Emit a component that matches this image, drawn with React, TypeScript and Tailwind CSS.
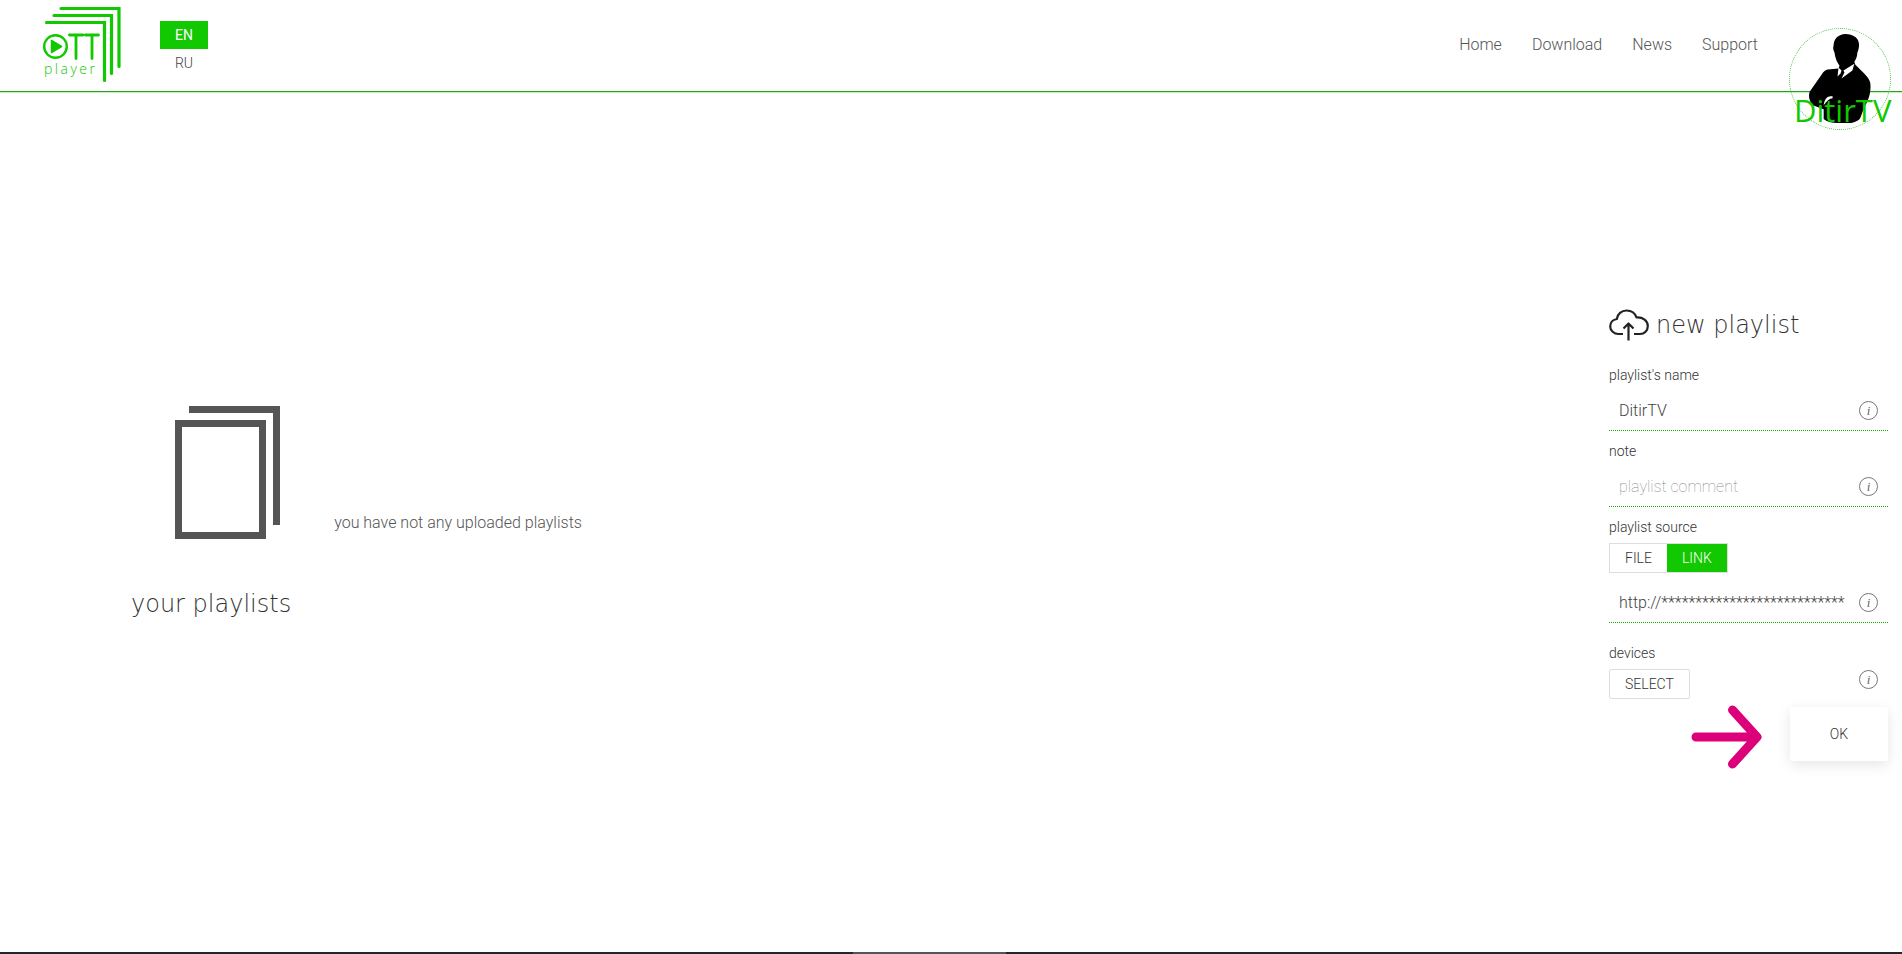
import { useState } from 'react'
import clsx from 'clsx'

const NAV = ['Home', 'Download', 'News', 'Support']

function Logo() {
  return (
    <svg width="80" height="80" viewBox="0 0 80 80" fill="none" stroke="#12c800" strokeLinecap="round">
      <g strokeWidth="3.2">
        <path d="M4.500 18.500H62.500V76.500" />
        <path d="M12 11.500H69.500V69.500" />
        <path d="M19 4.500H77V62.500" />
      </g>
      <circle cx="13.500" cy="42.500" r="11.300" strokeWidth="2.400" />
      <path d="M9.500 36.500V48.500L19.500 42.500Z" fill="#12c800" strokeWidth="1.500" strokeLinejoin="round" />
      <path d="M27.500 31H41M34 31V54.500M43.500 31H56.500M50 31V54.500" strokeWidth="2.800" />
      <text
        x="2"
        y="70"
        fontSize="14"
        fontFamily="Open Sans, sans-serif"
        fontWeight="300"
        letterSpacing="2.500"
        fill="#12c800"
        stroke="none"
      >
        player
      </text>
    </svg>
  )
}

function Avatar() {
  return (
    <a href="#profile" className="relative block size-[102px] rounded-full border border-dotted border-[#4fc445]">
      <svg className="size-full" viewBox="0 0 101 101">
        <path
          d="M56 5C49 5 44 10 44 17C43 19 44 22 45 24C46 31 48 34 50 37L49 40L38 41C35 42 34 43 32 46L20 63C18 68 20 73 23 77L34 81V91C37 94 42 95 48 95H62C67 94 70 92 71 90L75 79C81 70 82 60 81 54C80 49 74 44 66 36L65 33C67 30 68 27 68 24C71 17 70 11 66 8C63 6 60 5 56 5Z"
          fill="#000"
        />
        <path d="M49 39L48 48L51 45L52 42Z" fill="#fff" />
        <path d="M65 35L54 42L55 44L52 50L63 42Z" fill="#fff" />
        <path d="M43 68C38 67 35 70 34 77C37 73 40 70 43 70Z" fill="#fff" />
      </svg>
      <span className="absolute top-[63px] left-1 font-['Open_Sans'] text-[31px] leading-9 font-normal text-[#12c800]">
        DitirTV
      </span>
    </a>
  )
}

function InfoButton() {
  return (
    <button
      type="button"
      aria-label="info"
      className="flex size-[19px] shrink-0 items-center justify-center rounded-full border border-[#777] font-['Liberation_Serif'] text-[13px] leading-none text-[#666] italic"
    >
      i
    </button>
  )
}

interface FieldProps {
  id: string
  label?: string
  ariaLabel?: string
  value: string
  placeholder?: string
  onChange: (value: string) => void
}

function Field({ id, label, ariaLabel, value, placeholder, onChange }: FieldProps) {
  return (
    <div>
      {label && (
        <label htmlFor={id} className="block text-sm">
          {label}
        </label>
      )}
      <div className="flex h-[46px] items-center border-b border-dotted border-[#12a800] px-2.5 pt-1.5">
        <input
          id={id}
          aria-label={ariaLabel}
          value={value}
          placeholder={placeholder}
          onChange={(e) => onChange(e.target.value)}
          className="mr-2 min-w-0 flex-1 bg-transparent text-base font-light text-[#444] outline-none placeholder:font-thin placeholder:text-[#888]"
        />
        <InfoButton />
      </div>
    </div>
  )
}

export default function App() {
  const [lang, setLang] = useState('EN')
  const [source, setSource] = useState('LINK')
  const [name, setName] = useState('DitirTV')
  const [note, setNote] = useState('')
  const [url, setUrl] = useState('http://***************************')

  return (
    <div className="flex min-h-screen flex-col bg-white font-['Roboto',sans-serif] font-light text-[#333]">
      <header className="flex h-[92px] items-start border-b border-[#2a9d22] pr-[11px] pl-[42px] shadow-[0_1px_1px_#c4f3c0]">
        <a href="#home" aria-label="OTT player" className="mt-1">
          <Logo />
        </a>
        <div className="mt-[21px] ml-[38px] flex flex-col text-sm">
          {['EN', 'RU'].map((l) => (
            <button
              key={l}
              type="button"
              onClick={() => setLang(l)}
              className={clsx('h-7 w-12', l === lang ? 'bg-[#12c800] font-normal text-white' : 'text-[#444]')}
            >
              {l}
            </button>
          ))}
        </div>
        <nav className="mt-[33px] mr-[31px] ml-auto flex gap-[30px] text-base text-[#555]">
          {NAV.map((item) => (
            <a key={item} href={`#${item.toLowerCase()}`}>
              {item}
            </a>
          ))}
        </nav>
        <div className="mt-7">
          <Avatar />
        </div>
      </header>

      <main className="flex flex-1 items-center justify-between pr-3.5 pl-[131px]">
        <section className="flex items-start gap-[43px] pb-[18px]">
          <div className="flex flex-col items-center">
            <svg width="106" height="134" viewBox="0 0 106 134" fill="none" stroke="#555" strokeWidth="7" className="ml-[34px]">
              <path d="M3.500 17.500H87.500V129.500H3.500Z" />
              <path d="M14 3.500H101.500V119" />
            </svg>
            <h2 className="mt-12 font-['DejaVu_Sans'] text-2xl font-extralight">your playlists</h2>
          </div>
          <p className="mt-[105px] text-base text-[#555]">you have not any uploaded playlists</p>
        </section>

        <form className="w-[279px] pt-[34px]" onSubmit={(e) => e.preventDefault()}>
          <h2 className="mb-6 flex items-center gap-[7px] font-['DejaVu_Sans'] text-2xl font-extralight">
            <svg
              width="40"
              height="32"
              viewBox="0 0 40 32"
              fill="none"
              stroke="#222"
              strokeWidth="2.200"
              strokeLinejoin="round"
            >
              <path d="M14 25H9.500C5 25 1.200 21.500 1.200 17.500C1.200 13.500 4 10.500 7.800 10C8.500 5 12.500 1.500 17.500 1.500C22 1.500 26 4 27.500 8.500C34 8 38.800 12 38.800 17C38.800 21.500 35.500 25 31 25H25" />
              <path d="M19.500 31.500V15M14.500 19.500L19.500 14.500L24.500 19.500" />
            </svg>
            new playlist
          </h2>

          <div className="flex flex-col gap-2.5">
            <Field id="name" label="playlist's name" value={name} onChange={setName} />
            <Field id="note" label="note" value={note} placeholder="playlist comment" onChange={setNote} />
          </div>

          <fieldset className="mt-2.5">
            <legend className="text-sm">playlist source</legend>
            <div className="mt-1.5 flex h-[30px] w-fit border border-[#ddd] text-sm">
              {['FILE', 'LINK'].map((s) => (
                <button
                  key={s}
                  type="button"
                  onClick={() => setSource(s)}
                  className={clsx('px-[15px]', s === source && 'bg-[#12c800] text-white')}
                >
                  {s}
                </button>
              ))}
            </div>
          </fieldset>

          <div className="mt-1">
            <Field id="url" ariaLabel="playlist link" value={url} onChange={setUrl} />
          </div>

          <div className="mt-5 flex items-end justify-between pr-2.5">
            <div>
              <label htmlFor="devices" className="block text-sm">
                devices
              </label>
              <button id="devices" type="button" className="mt-1.5 h-[30px] rounded-xs border border-[#ddd] px-[15px] text-sm">
                SELECT
              </button>
            </div>
            <div className="pb-2.5">
              <InfoButton />
            </div>
          </div>

          <div className="mt-1.5 flex items-start justify-end gap-7">
            <svg
              width="71"
              height="64"
              viewBox="0 0 71 64"
              fill="none"
              stroke="#dd007b"
              strokeWidth="9"
              strokeLinecap="round"
              strokeLinejoin="round"
            >
              <path d="M5 32H65M41.500 5L66 32L41.500 59" />
            </svg>
            <button
              type="submit"
              className="mt-0.5 h-[54px] w-[98px] rounded-xs bg-white text-sm shadow-[0_4px_14px_rgba(0,0,0,0.1)]"
            >
              OK
            </button>
          </div>
        </form>
      </main>

      <footer className="flex h-0.5 justify-center bg-[#262626]">
        <div className="mr-[43px] w-[153px] bg-[#555]" />
      </footer>
    </div>
  )
}
